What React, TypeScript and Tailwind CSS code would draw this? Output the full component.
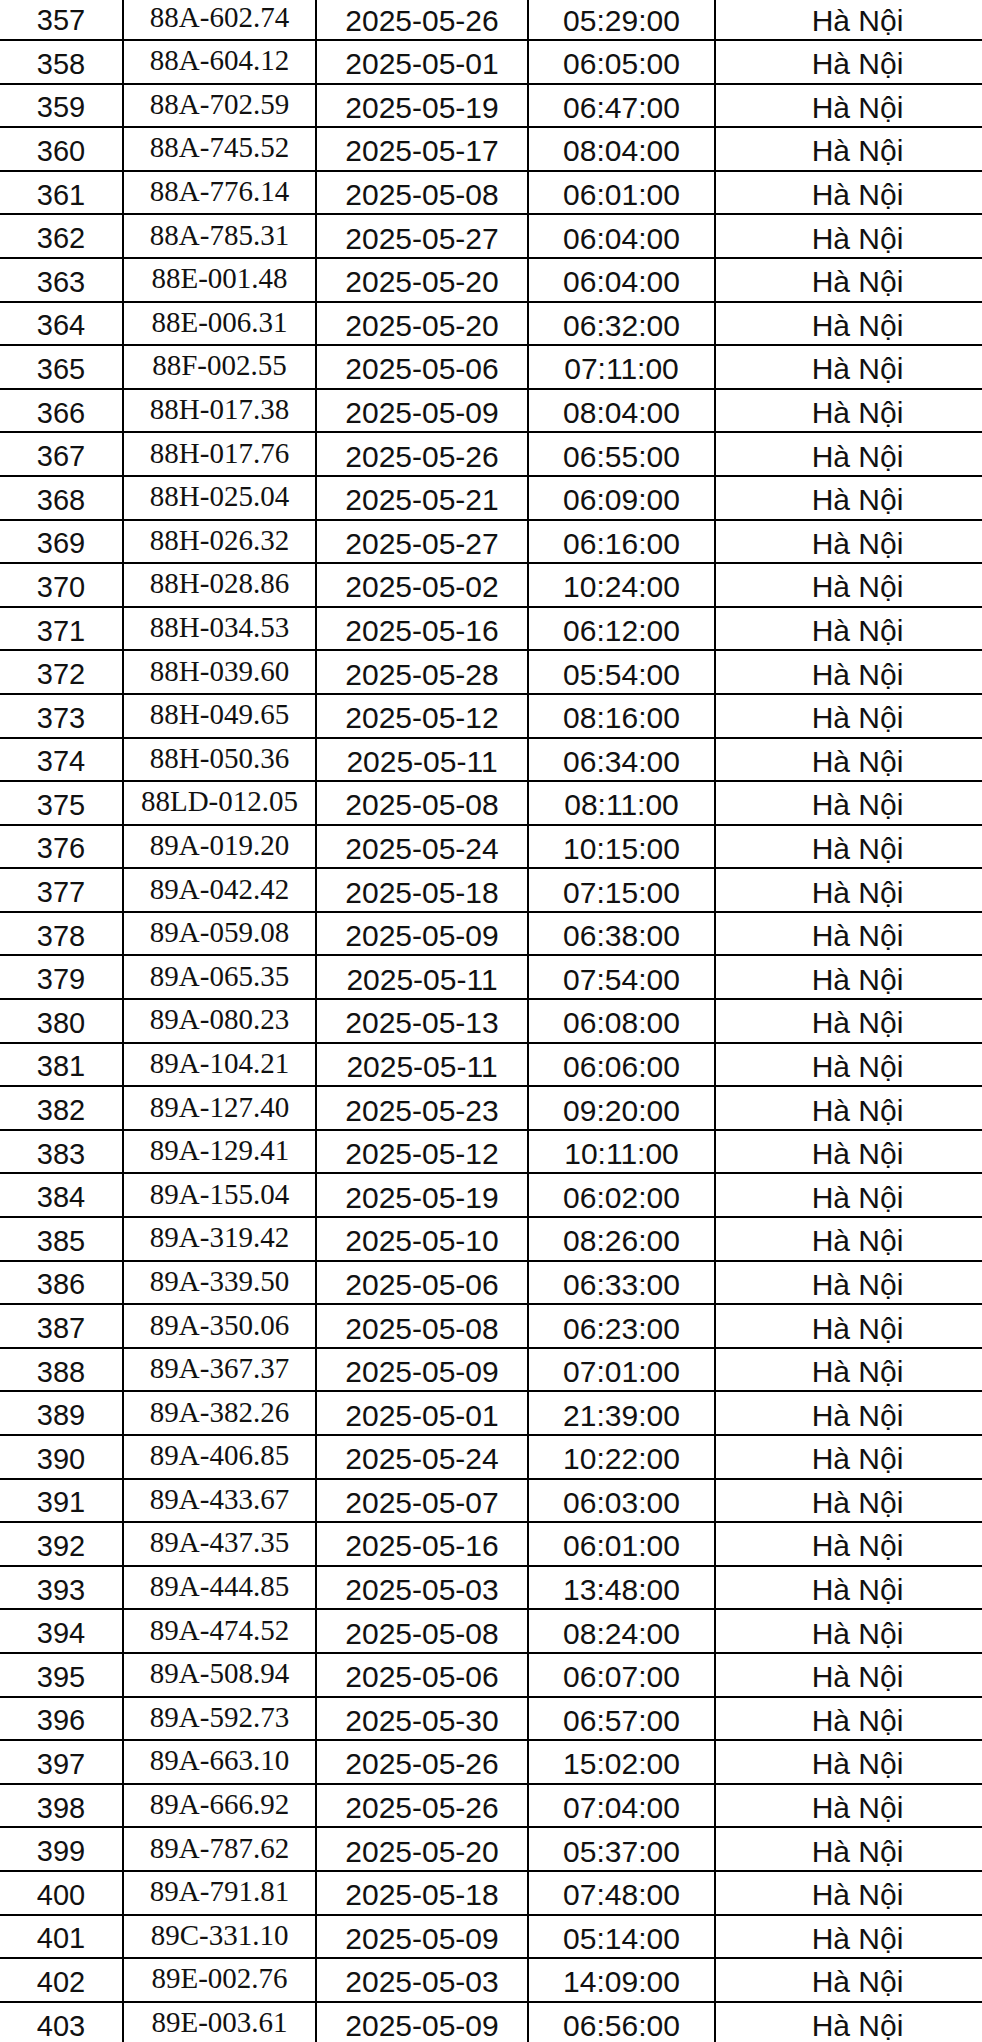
const rows: [string, string, string][] = [
  ['88A-602.74', '2025-05-26', '05:29:00'],
  ['88A-604.12', '2025-05-01', '06:05:00'],
  ['88A-702.59', '2025-05-19', '06:47:00'],
  ['88A-745.52', '2025-05-17', '08:04:00'],
  ['88A-776.14', '2025-05-08', '06:01:00'],
  ['88A-785.31', '2025-05-27', '06:04:00'],
  ['88E-001.48', '2025-05-20', '06:04:00'],
  ['88E-006.31', '2025-05-20', '06:32:00'],
  ['88F-002.55', '2025-05-06', '07:11:00'],
  ['88H-017.38', '2025-05-09', '08:04:00'],
  ['88H-017.76', '2025-05-26', '06:55:00'],
  ['88H-025.04', '2025-05-21', '06:09:00'],
  ['88H-026.32', '2025-05-27', '06:16:00'],
  ['88H-028.86', '2025-05-02', '10:24:00'],
  ['88H-034.53', '2025-05-16', '06:12:00'],
  ['88H-039.60', '2025-05-28', '05:54:00'],
  ['88H-049.65', '2025-05-12', '08:16:00'],
  ['88H-050.36', '2025-05-11', '06:34:00'],
  ['88LD-012.05', '2025-05-08', '08:11:00'],
  ['89A-019.20', '2025-05-24', '10:15:00'],
  ['89A-042.42', '2025-05-18', '07:15:00'],
  ['89A-059.08', '2025-05-09', '06:38:00'],
  ['89A-065.35', '2025-05-11', '07:54:00'],
  ['89A-080.23', '2025-05-13', '06:08:00'],
  ['89A-104.21', '2025-05-11', '06:06:00'],
  ['89A-127.40', '2025-05-23', '09:20:00'],
  ['89A-129.41', '2025-05-12', '10:11:00'],
  ['89A-155.04', '2025-05-19', '06:02:00'],
  ['89A-319.42', '2025-05-10', '08:26:00'],
  ['89A-339.50', '2025-05-06', '06:33:00'],
  ['89A-350.06', '2025-05-08', '06:23:00'],
  ['89A-367.37', '2025-05-09', '07:01:00'],
  ['89A-382.26', '2025-05-01', '21:39:00'],
  ['89A-406.85', '2025-05-24', '10:22:00'],
  ['89A-433.67', '2025-05-07', '06:03:00'],
  ['89A-437.35', '2025-05-16', '06:01:00'],
  ['89A-444.85', '2025-05-03', '13:48:00'],
  ['89A-474.52', '2025-05-08', '08:24:00'],
  ['89A-508.94', '2025-05-06', '06:07:00'],
  ['89A-592.73', '2025-05-30', '06:57:00'],
  ['89A-663.10', '2025-05-26', '15:02:00'],
  ['89A-666.92', '2025-05-26', '07:04:00'],
  ['89A-787.62', '2025-05-20', '05:37:00'],
  ['89A-791.81', '2025-05-18', '07:48:00'],
  ['89C-331.10', '2025-05-09', '05:14:00'],
  ['89E-002.76', '2025-05-03', '14:09:00'],
  ['89E-003.61', '2025-05-09', '06:56:00'],
];

export default function App() {
  return (
    <div className="h-[2042px] w-[982px] overflow-hidden bg-white text-[#111]">
      <div className="mt-[-2.6px] font-['Liberation_Sans',Arial,sans-serif]">
        {rows.map(([plate, date, time], i) => (
          <div key={plate} className="flex h-[43.6px] border-b-2 border-black">
            {/* STT */}
            <div className="flex w-[124px] shrink-0 items-center justify-center border-r-2 border-black pt-[5px] text-[29px] leading-none">
              {357 + i}
            </div>
            {/* Biển số */}
            <div className="flex w-[193px] shrink-0 items-center justify-center border-r-2 border-black pb-[2px] font-['Liberation_Serif','Times_New_Roman',serif] text-[29px] leading-none">
              {plate}
            </div>
            {/* Ngày */}
            <div className="flex w-[212px] shrink-0 items-center justify-center border-r-2 border-black pt-[5px] text-[30px] leading-none">
              {date}
            </div>
            {/* Giờ */}
            <div className="flex w-[187px] shrink-0 items-center justify-center border-r-2 border-black pt-[5px] text-[30px] leading-none">
              {time}
            </div>
            {/* Nơi */}
            <div className="flex flex-1 items-center justify-center pl-[17px] pt-[5px] text-[30px] leading-none">
              Hà Nội
            </div>
          </div>
        ))}
      </div>
    </div>
  );
}
